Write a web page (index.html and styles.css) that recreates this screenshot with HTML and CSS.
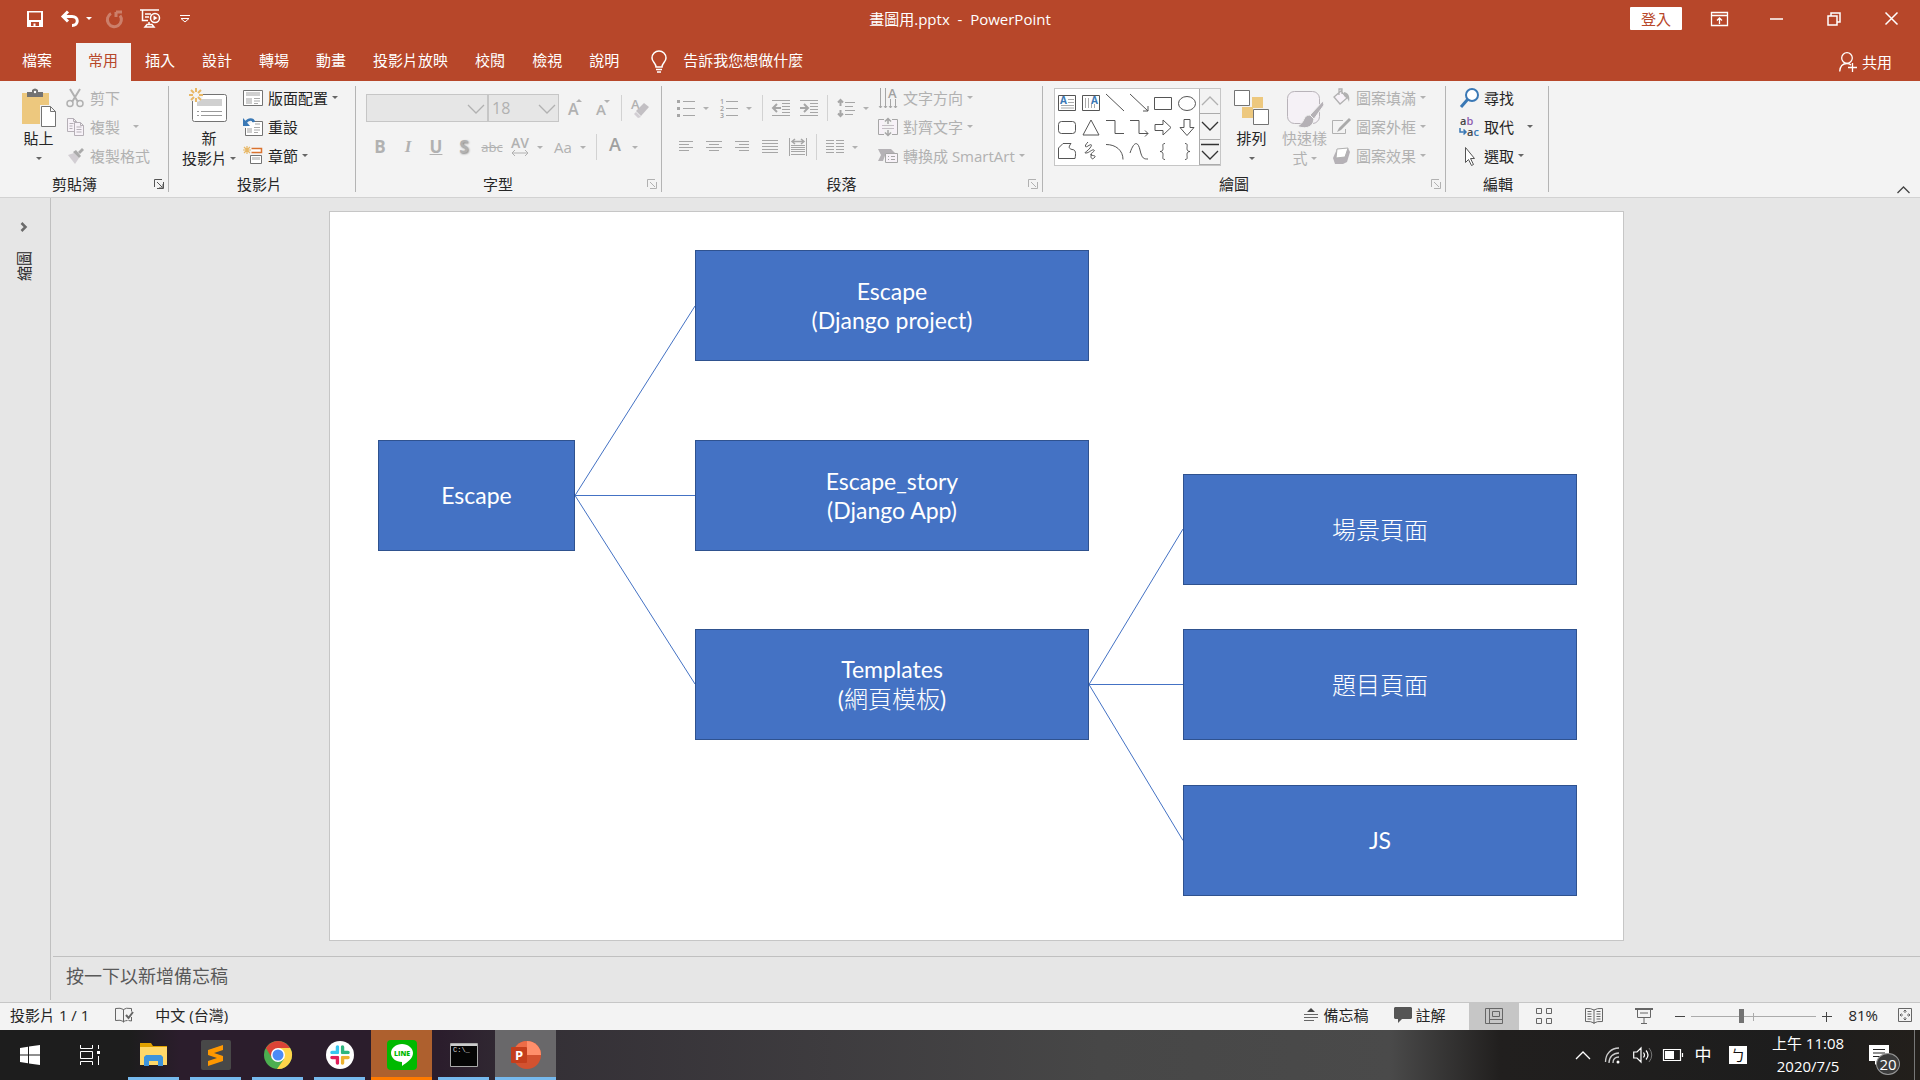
FILE: index.html
```html
<!DOCTYPE html>
<html lang="zh-TW">
<head>
  <meta charset="UTF-8">
  <meta name="viewport" content="width=device-width, initial-scale=1.0">
  <title>畫圖用.pptx - PowerPoint</title>
  <link rel="stylesheet" href="styles.css">
</head>
<body>
  <!-- Title bar -->
  <header class="header">
    <div class="title-bar">
      <div class="quick-access">
        <button class="qa-btn" aria-label="儲存檔案"><svg width="16" height="16" viewBox="0 0 16 16"><path d="M0 0h16v16H0zM2 1.500v7.500h12v-7.500zM4 11v4h2.500v-2.500h2v2.500H12v-4z" fill="#fff" fill-rule="evenodd"/></svg></button>
        <button class="qa-btn qa-undo" aria-label="復原"><svg width="18" height="16" viewBox="0 0 18 16"><path d="M7 .5 2 5.500l5 5M2 5.500h9c7 0 7 9 0 9" fill="none" stroke="#fff" stroke-width="3"/></svg><span class="caret"></span></button>
        <button class="qa-btn faded" aria-label="取消復原"><svg width="18" height="18" viewBox="0 0 18 18"><path d="M5 3.500a7 7 0 1 0 9 2M10 2v5M10 2h6" fill="none" stroke="#fff" stroke-width="3"/></svg></button>
        <button class="qa-btn" aria-label="從首張投影片"><svg width="20" height="19" viewBox="0 0 20 19"><path d="M0 1h19M2.500 1v10.500H8M5 5h6M5 8h4M9 13v3M5 18l2-2.500h5l2 2.500z" fill="none" stroke="#fff" stroke-width="1.500"/><circle cx="15" cy="9" r="4.500" fill="#b7472a" stroke="#fff" stroke-width="1.500"/><path d="M13.500 6.500v5l4-2.500z" fill="#fff"/></svg></button>
        <button class="qa-btn" aria-label="自訂快速存取工具列"><svg width="10" height="8" viewBox="0 0 10 8"><path d="M0 .5h10M1 3.500h8L5 7z" fill="none" stroke="#fff"/></svg></button>
      </div>
      <h1 class="doc-title">畫圖用.pptx  -  PowerPoint</h1>
      <div class="window-controls">
        <button class="sign-in">登入</button>
        <button class="win-btn" aria-label="功能區顯示選項"><svg width="17" height="14" viewBox="0 0 17 14"><path d="M.5.5h16v13H.5zM.5 3.500h16M8.500 12V6M6 8.500 8.500 6 11 8.500" fill="none" stroke="#fff" stroke-width="1.300"/></svg></button>
        <button class="win-btn" aria-label="最小化"><svg width="13" height="13" viewBox="0 0 13 13"><path d="M0 7h13" stroke="#fff" stroke-width="1.500"/></svg></button>
        <button class="win-btn" aria-label="還原"><svg width="14" height="14" viewBox="0 0 14 14"><path d="M1 4h9v9H1zM4 4V1h9v9h-3" fill="none" stroke="#fff" stroke-width="1.500"/></svg></button>
        <button class="win-btn" aria-label="關閉"><svg width="13" height="13" viewBox="0 0 13 13"><path d="m.5.5 12 12M12.500.5l-12 12" stroke="#fff" stroke-width="1.500"/></svg></button>
      </div>
    </div>
    <div class="tab-bar">
      <nav class="tabs">
        <a href="#" class="tab tab-file">檔案</a>
        <a href="#" class="tab active">常用</a>
        <a href="#" class="tab">插入</a>
        <a href="#" class="tab">設計</a>
        <a href="#" class="tab">轉場</a>
        <a href="#" class="tab">動畫</a>
        <a href="#" class="tab">投影片放映</a>
        <a href="#" class="tab">校閱</a>
        <a href="#" class="tab">檢視</a>
        <a href="#" class="tab">說明</a>
      </nav>
      <label class="tell-me">
        <svg width="16" height="22" viewBox="0 0 16 22"><path d="M5 16c0-4-4-5-4-9a7 7 0 0 1 14 0c0 4-4 5-4 9zM5 18.500h6M6 21h4" fill="none" stroke="#fff" stroke-width="1.500"/></svg>
        <input type="text" placeholder="告訴我您想做什麼" aria-label="告訴我您想做什麼">
      </label>
      <button class="share-btn"><svg width="18" height="20" viewBox="0 0 18 20"><circle cx="8" cy="6" r="5.300" fill="none" stroke="#fff" stroke-width="1.300"/><path d="M.7 19.500c.3-5 3-8 7.300-8 2 0 3 .5 4 1.500M13.500 11v9M9 15.500h9" fill="none" stroke="#fff" stroke-width="1.300"/></svg>共用</button>
    </div>
  </header>

  <!-- Ribbon -->
  <section class="ribbon">
    <div class="group group-clipboard">
      <div class="group-body">
        <button class="big-btn">
          <svg width="36" height="42" viewBox="0 0 36 42"><path d="M1 5h27v31H1z" fill="#edc87e"/><path d="M6 9V4h5V2q3-3 6 0v2h5v5z" fill="#737373"/><circle cx="14" cy="4" r="1.200" fill="#fff"/><path d="M20.500 18.500h9l5 5v15h-14z" fill="#fff" stroke="#f3f3f3" stroke-width="3"/><path d="M20.500 18.500h9l5 5v15h-14zM29.500 18.500v5h5" fill="#fff" stroke="#737373"/></svg>
          <span>貼上</span><span class="line"><i class="caret"></i></span>
        </button>
        <div class="stack">
          <button class="row-btn" disabled><svg width="20" height="20" viewBox="0 0 20 20"><path d="m5 1 8 13M15 1 7 14" stroke="#b1b1b1" stroke-width="2"/><g fill="none" stroke="#b1b1b1" stroke-width="1.500"><circle cx="5" cy="15.500" r="3"/><circle cx="15" cy="15.500" r="3"/></g></svg>剪下</button>
          <button class="row-btn" disabled><svg width="20" height="20" viewBox="0 0 20 20"><path d="M2.500 1.500h6l3 3v10h-9zM8.500 1.500v3h3M4.500 6.500h4M4.500 9h3M4.500 11.500h3" fill="#f7f2f8" stroke="#b5afb6"/><path d="M9.500 5.500h6l3 3v10h-9zM15.500 5.500v3h3M11.500 10h5M11.500 12.500h5M11.500 15h5" fill="#f7f2f8" stroke="#b5afb6"/></svg>複製<i class="caret far"></i></button>
          <button class="row-btn" disabled><svg width="20" height="20" viewBox="0 0 20 20"><path d="m3 9 6-2 5 5-4 6z" fill="#d2ced3"/><path d="m8 6 3-2 5 6-2 2z" fill="#aaa"/><path d="m13 6 4-4 2 2-4 4z" fill="#aaa"/></svg>複製格式</button>
        </div>
      </div>
      <div class="group-foot"><span>剪貼簿</span><button class="launcher" aria-label="剪貼簿"><svg width="10" height="10" viewBox="0 0 10 10"><path d="M.5 8V.5H8M3 3l5 5M9.500 3v6.500H3M9 5v4H5" fill="none" stroke="#555"/></svg></button></div>
    </div>

    <div class="group group-slides">
      <div class="group-body">
        <button class="big-btn big-wide">
          <svg width="40" height="42" viewBox="0 0 40 42"><rect x="3.500" y="6.500" width="34" height="27" rx="2" fill="#fff" stroke="#737373"/><path d="M8 11h25v7H8z" fill="#d0d0d0"/><path d="M8 23.500h2M12 23.500h21M8 27.500h2M12 27.500h21" stroke="#999"/><circle cx="7" cy="7" r="7" fill="#f3f3f3"/><path d="M7 0v4M7 10v4M0 7h4M10 7h4M2 2l3 3M9 9l3 3M12 2 9 5M5 9l-3 3" stroke="#e8b866" stroke-width="2"/></svg>
          <span>新</span><span class="line">投影片<i class="caret"></i></span>
        </button>
        <div class="stack">
          <button class="row-btn"><svg width="20" height="20" viewBox="0 0 20 20"><path d="M.5 2.500h19v15H.5z" fill="#fff" stroke="#737373"/><path d="M3 4h14v4H3zM3 10h6v6H3z" fill="#d0d0d0"/><path d="M11 10.500h6M11 13h6M11 15.500h4" stroke="#aaa"/></svg>版面配置<i class="caret"></i></button>
          <button class="row-btn"><svg width="20" height="20" viewBox="0 0 20 20"><path d="M9 4.500h10.500v14h-17V11" fill="#fff" stroke="#737373"/><path d="M4 11h5v5H4zM12 6h5v2h-5z" fill="#d0d0d0"/><path d="M11 10.500h6M11 13h6M11 15.500h4" stroke="#aaa"/><path d="M2 6C6 1 10 2 11 5" fill="none" stroke="#3a78b5" stroke-width="2.500"/><path d="M0 1v8h7z" fill="#3a78b5"/></svg>重設</button>
          <button class="row-btn"><svg width="20" height="20" viewBox="0 0 20 20"><path d="M4 0v8M0 4h8M1 1l6 6M7 1 1 7" stroke="#e8b866" stroke-width="1.200"/><path d="M8.500 2.500h10v4h-10" fill="#fff" stroke="#d9722e" stroke-width="1.500"/><path d="M7.500 9.500h11v8h-11z" fill="#fff" stroke="#737373"/><path d="M9 11h8v3H9z" fill="#d0d0d0"/></svg>章節<i class="caret"></i></button>
        </div>
      </div>
      <div class="group-foot no-launcher"><span>投影片</span></div>
    </div>

    <div class="group group-font">
      <div class="group-body">
        <div class="tools">
          <div class="tool-row">
            <span class="combo combo-font"><select disabled aria-label="字型"><option></option></select><svg width="18" height="10" viewBox="0 0 18 10"><path d="m1 1 8 8 8-8" fill="none" stroke="#b1b1b1" stroke-width="1.300"/></svg></span>
            <span class="combo combo-size"><select disabled aria-label="字型大小"><option>18</option></select><svg width="18" height="10" viewBox="0 0 18 10"><path d="m1 1 8 8 8-8" fill="none" stroke="#b1b1b1" stroke-width="1.300"/></svg></span>
            <button class="tool-btn after-combo" disabled aria-label="放大字型"><svg width="20" height="20" viewBox="0 0 20 20"><text x="3" y="17" class="glyph" font-size="16">A</text><path d="m11 4 3-3 3 3z" fill="#b1b1b1"/></svg></button>
            <button class="tool-btn" disabled aria-label="縮小字型"><svg width="20" height="20" viewBox="0 0 20 20"><text x="3" y="17" class="glyph" font-size="15">A</text><path d="m11 2 3 3 3-3z" fill="#b1b1b1"/></svg></button>
            <span class="sep"></span>
            <button class="tool-btn" disabled aria-label="清除所有格式設定"><svg width="20" height="20" viewBox="0 0 20 20"><text x="1" y="11" class="glyph" font-size="13">A</text><path d="m6 13 8-8 5 4-8 9z" fill="#c2bfc3"/><path d="m6 14 5 5-3 1-4-4z" fill="#d2ced3"/></svg></button>
          </div>
          <div class="tool-row">
            <button class="tool-btn bold" disabled>B</button>
            <button class="tool-btn italic" disabled>I</button>
            <button class="tool-btn underline" disabled>U</button>
            <button class="tool-btn shadow" disabled>S</button>
            <button class="tool-btn strike" disabled>abc</button>
            <button class="tool-btn split" disabled aria-label="字元間距"><svg width="18" height="20" viewBox="0 0 18 20"><text x="0" y="11" class="glyph" font-size="14">AV</text><path d="M1 16h16M4 13l-3 3 3 3M14 13l3 3-3 3" fill="none" stroke="#b1b1b1"/></svg><i class="caret"></i></button>
            <button class="tool-btn split" disabled><span class="case">Aa</span><i class="caret"></i></button>
            <span class="sep"></span>
            <button class="tool-btn split" disabled aria-label="字型色彩"><svg width="18" height="20" viewBox="0 0 18 20"><text x="3" y="14" class="glyph dark" font-size="18">A</text></svg><i class="caret"></i></button>
          </div>
        </div>
      </div>
      <div class="group-foot"><span>字型</span><button class="launcher" disabled aria-label="字型"><svg width="10" height="10" viewBox="0 0 10 10"><path d="M.5 8V.5H8M3 3l5 5M9.500 3v6.500H3" fill="none" stroke="#b1b1b1"/></svg></button></div>
    </div>

    <div class="group group-paragraph">
      <div class="group-body">
        <div class="tools">
          <div class="tool-row">
            <button class="tool-btn split" disabled aria-label="項目符號"><svg width="18" height="20" viewBox="0 0 18 20"><path d="M6 3.500h12M6 10.500h12M6 17.500h12" stroke="#a6a6a6"/><path d="M0 2h3v3H0zM0 9h3v3H0zM0 16h3v3H0z" fill="#a6a6a6"/></svg><i class="caret"></i></button>
            <button class="tool-btn split" disabled aria-label="編號"><svg width="18" height="20" viewBox="0 0 18 20"><path d="M6 3.500h12M6 10.500h12M6 17.500h12" stroke="#a6a6a6"/><g class="glyph dark" font-size="7"><text x="0" y="6">1</text><text x="0" y="13">2</text><text x="0" y="20">3</text></g></svg><i class="caret"></i></button>
            <span class="sep"></span>
            <button class="tool-btn" disabled aria-label="減少清單階層"><svg width="18" height="18" viewBox="0 0 18 18"><path d="M0 1.500h18M10 4.500h8M10 7.500h8M10 10.500h8M10 13.500h8M0 16.500h18" stroke="#a6a6a6"/><path d="M9 9H2M5 5 1 9l4 4" fill="none" stroke="#a6a6a6" stroke-width="2"/></svg></button>
            <button class="tool-btn" disabled aria-label="增加清單階層"><svg width="18" height="18" viewBox="0 0 18 18"><path d="M0 1.500h18M10 4.500h8M10 7.500h8M10 10.500h8M10 13.500h8M0 16.500h18" stroke="#a6a6a6"/><path d="M0 9h7M4 5l4 4-4 4" fill="none" stroke="#a6a6a6" stroke-width="2"/></svg></button>
            <span class="sep"></span>
            <button class="tool-btn split" disabled aria-label="行距"><svg width="18" height="20" viewBox="0 0 18 20"><path d="M8 4.500h10M8 8.500h8M8 12.500h10M8 16.500h8" stroke="#a6a6a6"/><path d="M3.500 3v5M3.500 12v5M1 4.500 3.500 2 6 4.500M1 15.500 3.500 18 6 15.500" fill="none" stroke="#a6a6a6" stroke-width="2"/></svg><i class="caret"></i></button>
          </div>
          <div class="tool-row">
            <button class="tool-btn" disabled aria-label="靠左對齊"><svg width="14" height="12" viewBox="0 0 14 12"><path d="M0 .5h14M0 3.500h10M0 6.500h14M0 9.500h10" stroke="#a6a6a6"/></svg></button>
            <button class="tool-btn" disabled aria-label="置中"><svg width="16" height="12" viewBox="0 0 16 12"><path d="M0 .5h16M3 3.500h10M0 6.500h16M3 9.500h10" stroke="#a6a6a6"/></svg></button>
            <button class="tool-btn" disabled aria-label="靠右對齊"><svg width="14" height="12" viewBox="0 0 14 12"><path d="M0 .5h14M4 3.500h10M0 6.500h14M4 9.500h10" stroke="#a6a6a6"/></svg></button>
            <button class="tool-btn" disabled aria-label="左右對齊"><svg width="16" height="14" viewBox="0 0 16 14"><path d="M0 .5h16M0 3.500h16M0 6.500h16M0 9.500h16M0 12.500h16" stroke="#a6a6a6"/></svg></button>
            <button class="tool-btn" disabled aria-label="分散對齊"><svg width="18" height="18" viewBox="0 0 18 18"><path d="M.5 0v18M17.500 0v18M2 7.500h14M2 9.500h14M2 11.500h14M2 13.500h14M2 16.500h14" stroke="#a6a6a6"/><path d="M3 3.500h12M6 1 3 3.500 6 6M12 1l3 2.500L12 6" fill="none" stroke="#a6a6a6" stroke-width="1.500"/></svg></button>
            <span class="sep"></span>
            <button class="tool-btn split" disabled aria-label="欄"><svg width="18" height="14" viewBox="0 0 18 14"><path d="M0 .5h8M0 3.500h8M0 6.500h8M0 9.500h8M0 12.500h8M10 .5h8M10 3.500h8M10 6.500h8M10 9.500h8M10 12.500h8" stroke="#a6a6a6"/></svg><i class="caret"></i></button>
          </div>
        </div>
        <div class="stack">
          <button class="row-btn" disabled><svg width="20" height="20" viewBox="0 0 20 20"><path d="M2.500 0v20M7.500 0v20M12.500 11v9M17.500 11v9M1 18l1.500 2L4 18M6 18l1.500 2L9 18M11 18l1.500 2 1.500-2M16 18l1.500 2 1.500-2" fill="none" stroke="#a6a6a6"/><text x="10" y="10" class="glyph dark" font-size="13">A</text></svg>文字方向<i class="caret"></i></button>
          <button class="row-btn" disabled><svg width="20" height="20" viewBox="0 0 20 20"><path d="M6 2.500H.5v15H6M14 2.500h5.500v15H14" fill="#f7f2f8" stroke="#a6a6a6"/><path d="M4 8.500h12M4 11.500h12" stroke="#c5bfc6"/><path d="M10 2v5M10 13v5M7 4.500l3-3 3 3M7 15.500l3 3 3-3" fill="none" stroke="#a6a6a6" stroke-width="1.500"/></svg>對齊文字<i class="caret"></i></button>
          <button class="row-btn" disabled><svg width="20" height="20" viewBox="0 0 20 20"><path d="M0 3h13l4 4H8l-3 8H0l3-6z" fill="#b5b2b6"/><path d="M7.500 7.500h12v9h-12z" fill="#f7f2f8" stroke="#a6a6a6"/><path d="M10 10.500h1M13 10.500h4M10 13.500h1M13 13.500h4" stroke="#a6a6a6"/></svg>轉換成 SmartArt<i class="caret"></i></button>
        </div>
      </div>
      <div class="group-foot"><span>段落</span><button class="launcher" disabled aria-label="段落"><svg width="10" height="10" viewBox="0 0 10 10"><path d="M.5 8V.5H8M3 3l5 5M9.500 3v6.500H3" fill="none" stroke="#b1b1b1"/></svg></button></div>
    </div>

    <div class="group group-drawing">
      <div class="group-body">
        <div class="gallery">
          <div class="shapes">
            <svg viewBox="0 0 20 20"><path d="M1.500 2.500h17v15h-17z"/><path d="M11 6.500h6M11 9.500h6M4 12.500h13M4 15h13" stroke="#aaa"/><text x="3" y="11" class="shape-letter">A</text></svg>
            <svg viewBox="0 0 20 20"><path d="M1.500 2.500h17v15h-17z"/><path d="M4.500 5v10M7.500 5v10M10.500 11v4M13.500 11v4" stroke="#aaa"/><text x="10" y="11" class="shape-letter">A</text></svg>
            <svg viewBox="0 0 20 20"><path d="m1 1 18 17"/></svg>
            <svg viewBox="0 0 20 20"><path d="m1 1 18 17M19 13v5h-5"/></svg>
            <svg viewBox="0 0 20 20"><path d="M1.500 4.500h17v12h-17z"/></svg>
            <svg viewBox="0 0 20 20"><ellipse cx="10" cy="10.500" rx="8.500" ry="7"/></svg>
            <svg viewBox="0 0 20 20"><rect x="1.500" y="4.500" width="17" height="12" rx="3"/></svg>
            <svg viewBox="0 0 20 20"><path d="m10 3 8 15H2z"/></svg>
            <svg viewBox="0 0 20 20"><path d="M1 3.500h9v13h9"/></svg>
            <svg viewBox="0 0 20 20"><path d="M1 3.500h9v13h9M16 13.500l3 3-3 3"/></svg>
            <svg viewBox="0 0 20 20"><path d="M2 7.500h8V3l8 7.500-8 7.500v-4.500H2z"/></svg>
            <svg viewBox="0 0 20 20"><path d="M7 2.500h6v8h4l-7 8-7-8h4z"/></svg>
            <svg viewBox="0 0 20 20"><path d="M1.500 17.500V7L6 2.500h8c-3 4-2 5 1 6 4 0 4 4 3 9z"/></svg>
            <svg viewBox="0 0 20 20"><path d="M7 1C3 5 4 7 7 5s5-2 2 2-7 5-4 5 6-4 8-3-5 4-3 5 6 0 3 3-4-3-2-4"/></svg>
            <svg viewBox="0 0 20 20"><path d="M1 3.500c10 0 17 6 17 15"/></svg>
            <svg viewBox="0 0 20 20"><path d="M1 12C5 0 9 0 11 9s4 9 8 9"/></svg>
            <svg viewBox="0 0 20 20"><path d="M12 2.500c-3 0-2 2-2 5 0 2-1 3-3 3 2 0 3 1 3 3 0 3-1 5 2 5"/></svg>
            <svg viewBox="0 0 20 20"><path d="M8 2.500c3 0 2 2 2 5 0 2 1 3 3 3-2 0-3 1-3 3 0 3 1 5-2 5"/></svg>
          </div>
          <div class="gallery-scroll">
            <button disabled aria-label="上一列"><svg width="18" height="10" viewBox="0 0 18 10"><path d="m1 9 8-8 8 8" fill="none" stroke="#b1b1b1" stroke-width="1.300"/></svg></button>
            <button aria-label="下一列"><svg width="18" height="10" viewBox="0 0 18 10"><path d="m1 1 8 8 8-8" fill="none" stroke="#333" stroke-width="1.300"/></svg></button>
            <button aria-label="其他"><svg width="18" height="18" viewBox="0 0 18 18"><path d="M0 1.500h18M1 8l8 8 8-8" fill="none" stroke="#333" stroke-width="1.300"/></svg></button>
          </div>
        </div>
        <button class="big-btn after-gallery">
          <svg width="36" height="42" viewBox="0 0 36 42"><path d="M18 9h11v11H18zM8 19h11v11H8z" fill="#edc87e"/><path d="M.5 2.500h15v15H.5zM19.500 21.500h15v15h-15z" fill="#fff" stroke="#737373"/></svg>
          <span>排列</span><span class="line"><i class="caret"></i></span>
        </button>
        <button class="big-btn" disabled>
          <svg width="38" height="42" viewBox="0 0 38 42"><rect x="1.500" y="3.500" width="32" height="32" rx="7" fill="#f5f1f6" stroke="#b8b3b9"/><path d="m37 13-13 14 4 4 10-14z" fill="#b5b1b6" stroke="#f3f3f3"/><path d="M24 27c-8 0-4 8-13 11 6 3 16 3 17-7z" fill="#b5b1b6" stroke="#f3f3f3"/></svg>
          <span>快速樣</span><span class="line">式<i class="caret"></i></span>
        </button>
        <div class="stack">
          <button class="row-btn" disabled><svg width="20" height="20" viewBox="0 0 20 20"><path d="m3 9 7-6 6 7-7 6zM8 7V1h3v5" fill="#f7f2f8" stroke="#b1b1b1" stroke-width="1.300"/><path d="M13 4c5 1 6 5 5 10-1-3-2-5-5-6z" fill="#b1b1b1"/></svg>圖案填滿<i class="caret"></i></button>
          <button class="row-btn" disabled><svg width="20" height="20" viewBox="0 0 20 20"><path d="M12 3.500H1.500v13h13V12" fill="none" stroke="#b1b1b1"/><path d="M18 1 8 11l-2 4 4-2L20 3z" fill="#aaa"/></svg>圖案外框<i class="caret"></i></button>
          <button class="row-btn" disabled><svg width="20" height="20" viewBox="0 0 20 20"><path d="m2 12 4-9 11-1 2 4-3 10-4 2H4z" fill="#b5b1b6"/><path d="m6 3 11-1-3 9-9 1z" fill="#fff" stroke="#b1b1b1"/></svg>圖案效果<i class="caret"></i></button>
        </div>
      </div>
      <div class="group-foot"><span>繪圖</span><button class="launcher" disabled aria-label="繪圖"><svg width="10" height="10" viewBox="0 0 10 10"><path d="M.5 8V.5H8M3 3l5 5M9.500 3v6.500H3" fill="none" stroke="#b1b1b1"/></svg></button></div>
    </div>

    <div class="group group-editing">
      <div class="group-body">
        <div class="stack">
          <button class="row-btn"><svg width="20" height="20" viewBox="0 0 20 20"><circle cx="13" cy="7" r="6" fill="#fff" stroke="#3a78b5" stroke-width="2"/><path d="m9 11-7 8" stroke="#3a78b5" stroke-width="3"/></svg>尋找</button>
          <button class="row-btn"><svg width="20" height="20" viewBox="0 0 20 20"><g class="replace-text"><text x="1" y="8">a<tspan fill="#8f5fb0">b</tspan></text><text x="8" y="19">a<tspan fill="#3a78b5">c</tspan></text></g><path d="M1 11v4h6M4.500 12.500 7 15l-2.500 2.500" fill="none" stroke="#3a78b5" stroke-width="1.500"/></svg>取代<i class="caret far"></i></button>
          <button class="row-btn"><svg width="20" height="20" viewBox="0 0 20 20"><path d="M6.500 1.500v15l3-3 3 6 2-1-3-6h4z" fill="#fff" stroke="#555"/></svg>選取<i class="caret"></i></button>
        </div>
      </div>
      <div class="group-foot no-launcher"><span>編輯</span></div>
    </div>
    <button class="collapse" aria-label="摺疊功能區"><svg width="13" height="8" viewBox="0 0 13 8"><path d="m.5 7 6-6 6 6" fill="none" stroke="#444" stroke-width="1.300"/></svg></button>
  </section>

  <!-- Slide area -->
  <main class="workspace">
    <aside class="thumb-pane">
      <button class="expand" aria-label="展開縮圖"><svg width="8" height="10" viewBox="0 0 8 10"><path d="m1.500 1 4 4-4 4" fill="none" stroke="#6b6b6b" stroke-width="2.500"/></svg></button>
      <span class="thumb-label">縮圖</span>
    </aside>
    <div class="editor">
      <div class="stage">
        <div class="slide">
          <svg class="links" viewBox="0 0 1293 728">
            <path d="M245 283.500 365 94M245 283.500h120M245 283.500 365 472M759 472.500 853 317M759 472.500h94M759 472.500l94 156"/>
          </svg>
          <div class="node node-root">Escape</div>
          <div class="node node-project">Escape<br>(Django project)</div>
          <div class="node node-app">Escape_story<br>(Django App)</div>
          <div class="node node-templates">Templates<br><span>(<span class="cjk">網頁模板</span>)</span></div>
          <div class="node node-scene"><span class="cjk">場景頁面</span></div>
          <div class="node node-quiz"><span class="cjk">題目頁面</span></div>
          <div class="node node-js">JS</div>
        </div>
      </div>
      <textarea class="notes" rows="1" placeholder="按一下以新增備忘稿" aria-label="備忘稿"></textarea>
    </div>
  </main>

  <!-- Status bar -->
  <footer class="status-bar">
    <span class="status-text">投影片 1 / 1</span>
    <button class="status-btn proof" aria-label="校對"><svg width="18" height="16" viewBox="0 0 18 16"><path d="M8.500 2.500q-3-2-8-1v12q5-1 8 1 2-1 4-1M8.500 2.500q2-2 8-1v3M8.500 2.500v13M16.500 10v4l-3-.5" fill="none" stroke="#666"/><path d="m11 8 2.500 3L18 5" fill="none" stroke="#666" stroke-width="2"/></svg></button>
    <span class="status-text">中文 (台灣)</span>
    <div class="status-right">
      <button class="status-btn notes-btn"><svg width="14" height="14" viewBox="0 0 14 14"><path d="m7 0 4 4H3z" fill="#444"/><path d="M0 6.500h14M0 9.500h14M0 12.500h10" stroke="#666"/></svg>備忘稿</button>
      <button class="status-btn comment-btn"><svg width="18" height="16" viewBox="0 0 18 16"><path d="M1 0h16l1 1v10l-1 1H8l-4 4v-4H1l-1-1V1z" fill="#555"/></svg>註解</button>
      <button class="view-btn active" aria-label="標準模式"><svg width="18" height="16" viewBox="0 0 18 16"><path d="M.5.5h17v15H.5zM4.500.5v15M4.500 11.500h13M7.500 3.500h7v5h-7z" fill="none" stroke="#666"/></svg></button>
      <button class="view-btn" aria-label="投影片瀏覽"><svg width="16" height="16" viewBox="0 0 16 16"><path d="M.5.5h5v5h-5zM10.500.5h5v5h-5zM.5 10.500h5v5h-5zM10.500 10.500h5v5h-5z" fill="none" stroke="#666"/></svg></button>
      <button class="view-btn" aria-label="閱讀檢視"><svg width="18" height="16" viewBox="0 0 18 16"><path d="M9 2Q6 0 .5.5v13Q6 13 9 15q3-2 8.500-1.500V.5Q12 0 9 2zv14M2.500 3.500h4M2.500 6h4M2.500 8.500h4M2.500 11h4M11.500 3.500h4M11.500 6h4M11.500 8.500h4M11.500 11h4" fill="none" stroke="#666"/></svg></button>
      <button class="view-btn" aria-label="投影片放映"><svg width="18" height="16" viewBox="0 0 18 16"><path d="M0 1h18" stroke="#666" stroke-width="2"/><path d="M2.500 1v8.500h13V1M5 5h8M9 9.500v6M6 15.500h6" fill="none" stroke="#666"/></svg></button>
      <button class="zoom-btn" aria-label="縮小"><svg width="10" height="10" viewBox="0 0 10 10"><path d="M0 4.500h10" stroke="#444"/></svg></button>
      <span class="zoom-slider"><input type="range" min="0" max="100" value="40" aria-label="縮放"></span>
      <button class="zoom-btn" aria-label="放大"><svg width="10" height="10" viewBox="0 0 10 10"><path d="M0 4.500h10M4.500 0v10" stroke="#444"/></svg></button>
      <span class="status-text zoom-value">81%</span>
      <button class="status-btn" aria-label="調整至視窗大小"><svg width="14" height="14" viewBox="0 0 14 14"><path d="M.5.5h13v13H.5zM7 2v3M7 9v3M2 7h3M9 7h3M5.500 3.500 7 2l1.500 1.500M5.500 10.500 7 12l1.500-1.500M3.500 5.500 2 7l1.500 1.500M10.500 5.500 12 7l-1.500 1.500" fill="none" stroke="#666"/></svg></button>
    </div>
  </footer>

  <!-- Windows taskbar -->
  <div class="taskbar">
    <button class="task-sys" aria-label="開始"><svg width="20" height="20" viewBox="0 0 20 20"><path d="m0 3 8-1.200V9.500H0zM9 1.600 20 0v9.500H9zM0 10.500h8v7.700L0 17zM9 10.500h11V20L9 18.400z" fill="#fff"/></svg></button>
    <button class="task-sys" aria-label="工作檢視"><svg width="20" height="20" viewBox="0 0 20 20"><path d="M.5 0v3.500h12V0M.5 20v-3.500h12V20M.5 6.500h12v7H.5zM18.500 0v4M18.500 11v9" fill="none" stroke="#fff"/><path d="M17 6h3v3h-3z" fill="#fff"/></svg></button>
    <div class="task-apps">
      <button class="task-app" aria-label="檔案總管"><svg width="28" height="24" viewBox="0 0 28 24"><path d="M0 0h11l2 3h14v19H0z" fill="#e0a100"/><path d="M0 4h27v18H0z" fill="#ffd869"/><path d="M4 23V14l2-2h15l2 2v9h-5v-5H9v5z" fill="#3d94dc"/></svg></button>
      <button class="task-app" aria-label="Sublime Text"><svg width="30" height="30" viewBox="0 0 30 30"><rect width="30" height="30" rx="2" fill="#484848"/><path d="M7 10 22 5v5l-9 3 9 3v5L7 26v-5l9-3-9-3z" fill="#ff9800"/></svg></button>
      <button class="task-app" aria-label="Chrome"><svg width="28" height="28" viewBox="0 0 28 28"><circle cx="14" cy="14" r="14" fill="#4caf50"/><path d="M14 7h12.100A14 14 0 0 1 13 28l7-10z" fill="#ffd54a"/><path d="M1.900 7a14 14 0 0 1 24.200 0H14l-6 10z" fill="#db4437"/><circle cx="14" cy="14" r="7" fill="#fff"/><circle cx="14" cy="14" r="5.500" fill="#4c8bf5"/></svg></button>
      <button class="task-app" aria-label="Slack"><svg width="28" height="28" viewBox="0 0 28 28"><circle cx="14" cy="14" r="14" fill="#fff"/><g fill="none" stroke-width="3.500" stroke-linecap="round"><path d="M11.500 6v5.500M6 11.500h5.500" stroke="#36c5f0"/><path d="M16.500 6v5.500M16.500 11.500H22" stroke="#2eb67d"/><path d="M16.500 16.500H22M16.500 16.500V22" stroke="#ecb22e"/><path d="M11.500 16.500V22M6 16.500h5.500" stroke="#e01e5a"/></g><path d="M14 4v20M4 14h20" stroke="#fff" stroke-width="1.300"/></svg></button>
      <button class="task-app alert" aria-label="LINE"><svg width="30" height="30" viewBox="0 0 30 30"><rect width="30" height="30" rx="4" fill="#00b900"/><path d="M15 4c6 0 11 4 11 9 0 6-6 9-11 13v-4C9 22 4 18 4 13s5-9 11-9z" fill="#fff"/><text x="7" y="16" class="line-text">LINE</text></svg></button>
      <button class="task-app" aria-label="命令提示字元"><svg width="28" height="24" viewBox="0 0 28 24"><path d="M.5.5h27v23H.5z" fill="#050505" stroke="#aaa"/><path d="M1 1h26v2H1z" fill="#ccc"/><text x="3" y="9" class="cmd-text">C:\_</text></svg></button>
      <button class="task-app current" aria-label="PowerPoint"><svg width="30" height="28" viewBox="0 0 30 28"><circle cx="16" cy="14" r="14" fill="#d35230"/><path d="M16 0v14H2A14 14 0 0 1 16 0z" fill="#ed6c47"/><path d="M16 0a14 14 0 0 1 14 14H16z" fill="#ff8f6b"/><rect y="6" width="16" height="16" rx="1" fill="#c43e1c"/><text x="4" y="19" class="ppt-text">P</text></svg></button>
    </div>
    <div class="tray">
      <button class="tray-btn" aria-label="顯示隱藏的圖示"><svg width="16" height="10" viewBox="0 0 16 10"><path d="m1 9 7-7 7 7" fill="none" stroke="#fff" stroke-width="1.300"/></svg></button>
      <button class="tray-btn" aria-label="網路"><svg width="18" height="18" viewBox="0 0 18 18"><path d="M1.500 16C1.500 8 7 2 15 2M5 17c0-6 4-10 10-10M9 17c0-4 2-6 6-6" fill="none" stroke="#ccc" stroke-width="1.300"/><circle cx="14" cy="16" r="1.500" fill="#fff"/></svg></button>
      <button class="tray-btn" aria-label="音量"><svg width="20" height="18" viewBox="0 0 20 18"><path d="M.7 6h3.300l4-4v14l-4-4H.7zM10.500 6.500q2 2.500 0 5M13 4.500q4 4.500 0 9" fill="none" stroke="#fff" stroke-width="1.200"/><path d="M16 2q5.500 7 0 14" fill="none" stroke="#777"/></svg></button>
      <button class="tray-btn" aria-label="電池"><svg width="20" height="12" viewBox="0 0 20 12"><path d="M.5.500h17v11H.5zM19.500 4v4" fill="none" stroke="#fff" stroke-width="1.200"/><path d="M2 2h9v8H2z" fill="#fff"/></svg></button>
      <button class="tray-btn ime">中</button>
      <button class="tray-btn ime-mode"><span>ㄅ</span></button>
      <div class="clock"><time>上午 11:08</time><time>2020/7/5</time></div>
      <button class="notify" aria-label="通知"><svg width="20" height="20" viewBox="0 0 20 20"><path d="M0 0h20v16H10l-4 4v-4H0z" fill="#fff"/><path d="M4 4.500h12M4 8h12M4 11.500h8" stroke="#222"/></svg><span class="badge">20</span></button>
      <span class="show-desktop"></span>
    </div>
  </div>
</body>
</html>
```

FILE: styles.css
```css
/* General Styling */
* {
  box-sizing: border-box;
}

body {
  margin: 0;
  height: 100vh;
  display: flex;
  flex-direction: column;
  overflow: hidden;
  background-color: #e6e6e6;
  font-family: "Open Sans", "Noto Sans CJK TC", sans-serif;
  font-size: 15px;
  line-height: 20px;
  color: #262626;
}

button {
  display: flex;
  align-items: center;
  justify-content: center;
  margin: 0;
  padding: 0;
  border: none;
  background: none;
  font: inherit;
  color: inherit;
}

button:disabled {
  color: #b1b1b1;
}

svg {
  display: block;
  flex: none;
  overflow: visible;
}

.caret {
  flex: none;
  width: 6px;
  border: 3px solid transparent;
  border-top-color: #666;
  border-bottom: none;
}

button:disabled .caret {
  border-top-color: #b1b1b1;
}

/* Title bar and tabs */
.header {
  background-color: #b7472a;
  color: #fff;
}

.title-bar {
  display: grid;
  grid-template-columns: 1fr auto 1fr;
  align-items: center;
  height: 43px;
  padding-bottom: 6px;
}

.quick-access {
  display: flex;
  padding-left: 17px;
}

.qa-btn {
  width: 35px;
  height: 30px;
}

.qa-undo {
  width: 45px;
  justify-content: flex-start;
  gap: 7px;
  padding-left: 9px;
}

.qa-undo .caret {
  border-top-color: #fff;
}

.faded {
  opacity: 0.3;
}

.doc-title {
  margin: 0;
  font-size: 15px;
  font-weight: 400;
  white-space: pre;
}

.window-controls {
  display: flex;
  justify-content: flex-end;
  align-items: center;
}

.sign-in {
  width: 52px;
  height: 23px;
  margin-right: 9px;
  border-radius: 1px;
  background-color: #fff;
  color: #b7472a;
}

.win-btn {
  width: 57px;
  height: 30px;
}

.win-btn:last-child {
  width: 58px;
}

.tab-bar {
  display: flex;
  height: 38px;
}

.tabs {
  display: flex;
  gap: 2px;
}

.tab {
  padding: 7px 13px 11px 12px;
  color: #fff;
  text-decoration: none;
}

.tab-file {
  padding-left: 22px;
  padding-right: 22px;
}

.tab.active {
  background-color: #f3f3f3;
  color: #b7472a;
}

.tell-me {
  display: flex;
  align-items: center;
  gap: 16px;
  padding-left: 19px;
}

.tell-me input {
  width: 200px;
  padding: 0 0 4px;
  border: none;
  background: none;
  font: inherit;
}

.tell-me input::placeholder {
  color: #fff;
  opacity: 1;
}

.share-btn {
  gap: 5px;
  margin-left: auto;
  padding-right: 28px;
}

/* Ribbon */
.ribbon {
  display: flex;
  height: 117px;
  padding-top: 2px;
  border-bottom: 1px solid #d2d2d2;
  background-color: #f3f3f3;
}

.group {
  display: flex;
  flex-direction: column;
  flex: none;
  height: 114px;
  background: linear-gradient(#b4b4b4, #b4b4b4) right 3px / 1px 106px no-repeat;
}

.group-clipboard {
  width: 169px;
  padding-left: 12px;
}

.group-slides {
  width: 187px;
  padding-left: 6px;
}

.group-font {
  width: 306px;
  padding-left: 10px;
}

.group-paragraph {
  width: 381px;
  padding-left: 10px;
}

.group-drawing {
  width: 403px;
  padding-left: 11px;
}

.group-editing {
  width: 103px;
  padding-left: 13px;
}

.group-body {
  display: flex;
  height: 87px;
}

.group-foot {
  display: flex;
  align-items: center;
  height: 27px;
  padding-right: 5px;
}

.group-foot span {
  flex: 1;
  padding-right: 17px;
  text-align: center;
}

.no-launcher {
  padding-right: 12px;
}

.no-launcher span {
  padding-right: 0;
}

.launcher {
  width: 10px;
  height: 10px;
}

.big-btn {
  flex-direction: column;
  justify-content: flex-start;
  width: 53px;
  padding-top: 5px;
  white-space: nowrap;
}

.big-btn svg {
  margin-bottom: -2px;
}

.big-wide {
  width: 68px;
}

.line {
  display: flex;
  align-items: center;
  justify-content: center;
  gap: 3px;
  height: 20px;
}

.stack {
  display: flex;
  flex-direction: column;
}

.row-btn {
  justify-content: flex-start;
  height: 29px;
  gap: 5px;
  white-space: nowrap;
}

.row-btn .caret {
  margin-left: -1px;
}

.row-btn .far {
  margin-left: 8px;
}

.tools {
  display: flex;
  flex-direction: column;
  gap: 11px;
  padding-top: 11px;
}

.group-paragraph .tools {
  width: 206px;
}

.tool-row {
  display: flex;
  align-items: center;
  height: 28px;
}

.tool-btn {
  width: 28px;
  height: 28px;
  font-size: 17px;
}

.tool-btn.split {
  width: auto;
  gap: 8px;
  padding: 0 6px 0 5px;
}

.after-combo {
  margin-left: 2px;
}

.sep {
  width: 1px;
  height: 26px;
  margin: 0 4px;
  background-color: #d2d2d2;
}

.glyph {
  fill: #b1b1b1;
  font-family: "Open Sans", sans-serif;
  font-weight: 600;
}

.dark {
  fill: #a0a0a0;
}

.bold,
.underline,
.shadow {
  font-weight: 700;
}

.italic {
  font-family: "Liberation Serif", serif;
  font-style: italic;
  font-weight: 700;
}

.underline {
  text-decoration: underline;
}

.shadow {
  text-shadow: 1px 1px 2px #888;
}

.tool-btn.strike {
  font-size: 13px;
  text-decoration: line-through;
}

.case {
  width: 18px;
  font-size: 15px;
}

.combo {
  position: relative;
  height: 28px;
}

.combo-font {
  width: 122px;
}

.combo-size {
  width: 71px;
}

.combo select {
  width: 100%;
  height: 100%;
  padding: 0 3px;
  appearance: none;
  border: 1px solid #c6c6c6;
  border-radius: 0;
  background-color: #e6e6e6;
  font: inherit;
  font-size: 16px;
  color: #b1b1b1;
  opacity: 1;
}

.combo svg {
  position: absolute;
  right: 3px;
  top: 10px;
}

/* Shape gallery */
.gallery {
  display: flex;
  width: 167px;
  height: 78px;
  margin-top: 5px;
  border: 1px solid #c6c6c6;
  background-color: #fff;
}

.shapes {
  display: grid;
  grid-template-columns: repeat(6, 24px);
  grid-auto-rows: 24px;
  padding-top: 2px;
}

.shapes svg {
  width: 20px;
  height: 20px;
  margin: 2px;
  fill: none;
  stroke: #555;
}

.shapes .shape-letter {
  fill: #3a78b5;
  stroke: none;
  font-size: 10px;
  font-weight: 700;
}

.gallery-scroll {
  flex: 1;
  display: flex;
  flex-direction: column;
}

.gallery-scroll button {
  flex: 1;
  border-left: 1px solid #ababab;
  border-bottom: 1px solid #ababab;
  background-color: #f3f3f3;
}

.after-gallery {
  margin-left: 4px;
}

.replace-text {
  fill: #444;
  font-size: 11px;
  font-weight: 600;
}

.collapse {
  align-self: flex-end;
  margin: 0 10px 3px auto;
}

/* Workspace */
.workspace {
  flex: 1;
  display: flex;
  min-height: 0;
}

.thumb-pane {
  display: flex;
  flex-direction: column;
  align-items: center;
  width: 51px;
  margin-bottom: 2px;
  padding: 24px 3px 0 0;
  border-right: 1px solid #c0c0c0;
}

.expand {
  margin-bottom: 19px;
}

/* Label reads from bottom to top */
.thumb-label {
  writing-mode: vertical-rl;
  text-orientation: sideways;
  transform: rotate(180deg);
  line-height: 16px;
}

.editor {
  flex: 1;
  display: flex;
  flex-direction: column;
  margin-left: 2px;
}

.stage {
  flex: 1;
  display: flex;
  justify-content: center;
  align-items: center;
  padding: 0 20px 2px 0;
}

.slide {
  position: relative;
  flex: none;
  width: 1295px;
  height: 730px;
  border: 1px solid #c6c6c6;
  background-color: #fff;
}

.links {
  width: 1293px;
  height: 728px;
  fill: none;
  stroke: #4472c4;
}

.node {
  position: absolute;
  display: flex;
  flex-direction: column;
  align-items: center;
  justify-content: center;
  width: 394px;
  height: 111px;
  border: 1px solid #2f528f;
  background-color: #4472c4;
  color: #fff;
  font-family: Lato, "Noto Sans CJK TC", sans-serif;
  font-size: 23px;
  line-height: 29px;
  text-align: center;
}

.cjk {
  font-size: 24px;
  font-weight: 300;
}

.node-root {
  left: 48px;
  top: 228px;
  width: 197px;
}

.node-project {
  left: 365px;
  top: 38px;
}

.node-app {
  left: 365px;
  top: 228px;
}

.node-templates {
  left: 365px;
  top: 417px;
}

.node-scene {
  left: 853px;
  top: 262px;
}

.node-quiz {
  left: 853px;
  top: 417px;
}

.node-js {
  left: 853px;
  top: 573px;
}

.notes {
  height: 46px;
  padding: 7px 13px;
  border: none;
  border-top: 1px solid #c0c0c0;
  background: none;
  resize: none;
  font: inherit;
  font-size: 18px;
  line-height: 24px;
}

.notes::placeholder {
  color: #595959;
}

/* Status bar */
.status-bar {
  display: flex;
  align-items: center;
  height: 28px;
  padding: 0 8px 0 10px;
  border-top: 1px solid #c6c6c6;
  background-color: #f3f3f3;
}

.status-text,
.status-btn {
  padding-bottom: 3px;
}

.proof {
  margin: 0 22px 0 26px;
}

.status-right {
  display: flex;
  align-items: center;
  height: 100%;
  margin-left: auto;
}

.status-btn {
  gap: 5px;
}

.comment-btn {
  gap: 3px;
  margin: 0 24px 0 26px;
}

.view-btn {
  width: 50px;
  height: 100%;
  padding-bottom: 2px;
}

.view-btn.active {
  background-color: #c6c6c6;
}

.zoom-btn {
  width: 22px;
}

.zoom-slider {
  position: relative;
  display: flex;
  width: 125px;
}

.zoom-slider::before {
  content: "";
  position: absolute;
  left: 62px;
  top: 4px;
  width: 1px;
  height: 8px;
  background-color: #ababab;
}

.zoom-slider input {
  position: relative;
  width: 125px;
  height: 16px;
  margin: 0;
  appearance: none;
  background: none;
}

.zoom-slider input::-webkit-slider-runnable-track {
  height: 1px;
  background-color: #ababab;
}

.zoom-slider input::-webkit-slider-thumb {
  appearance: none;
  width: 5px;
  height: 14px;
  margin-top: -7px;
  background-color: #737373;
}

.zoom-value {
  margin: 0 20px 0 10px;
}

/* Windows taskbar */
.taskbar {
  display: flex;
  height: 50px;
  background: linear-gradient(90deg, #1d1d1d 0, #1d1d1d 130px, #2b1d2c 180px, #2b1d2c 440px, #343036 540px, #474747 1100px, #4a4a4a 1390px, #211f1e 1500px, #1d1d1d 1800px, #231f1b);
  color: #fff;
}

.task-sys {
  width: 60px;
}

.task-apps {
  display: flex;
  gap: 1px;
  padding-left: 3px;
}

.task-app {
  position: relative;
  width: 61px;
}

.task-app::after {
  content: "";
  position: absolute;
  left: 5px;
  right: 5px;
  bottom: 0;
  height: 3px;
  background-color: #76b9ed;
}

.task-app.alert {
  background-color: #ae602e;
}

.task-app.alert::after {
  left: 0;
  right: 0;
  background-color: #ff7a00;
}

.task-app.current {
  background-color: #69686a;
}

.task-app.current::after {
  left: 0;
  right: 0;
}

.line-text {
  fill: #00b900;
  font-size: 7px;
  font-weight: 800;
}

.cmd-text {
  fill: #ddd;
  font-family: "Liberation Mono", monospace;
  font-size: 7px;
}

.ppt-text {
  fill: #fff;
  font-size: 13px;
  font-weight: 700;
}

.tray {
  display: flex;
  margin-left: auto;
  padding-right: 5px;
}

.tray-btn {
  width: 30px;
}

.ime {
  font-size: 17px;
}

.ime-mode {
  width: 40px;
}

.ime-mode span {
  width: 18px;
  height: 18px;
  background-color: #fff;
  line-height: 18px;
  color: #111;
}

.clock {
  display: flex;
  flex-direction: column;
  align-items: center;
  width: 100px;
  padding-top: 2px;
  line-height: 23px;
}

.notify {
  position: relative;
  justify-content: flex-start;
  width: 56px;
  padding-left: 11px;
}

.badge {
  position: absolute;
  left: 18px;
  top: 23px;
  width: 24px;
  height: 22px;
  border: 1px solid #999;
  border-radius: 50%;
  background-color: #3c3c3c;
  line-height: 20px;
}

.show-desktop {
  width: 1px;
  background-color: #777;
}
```
